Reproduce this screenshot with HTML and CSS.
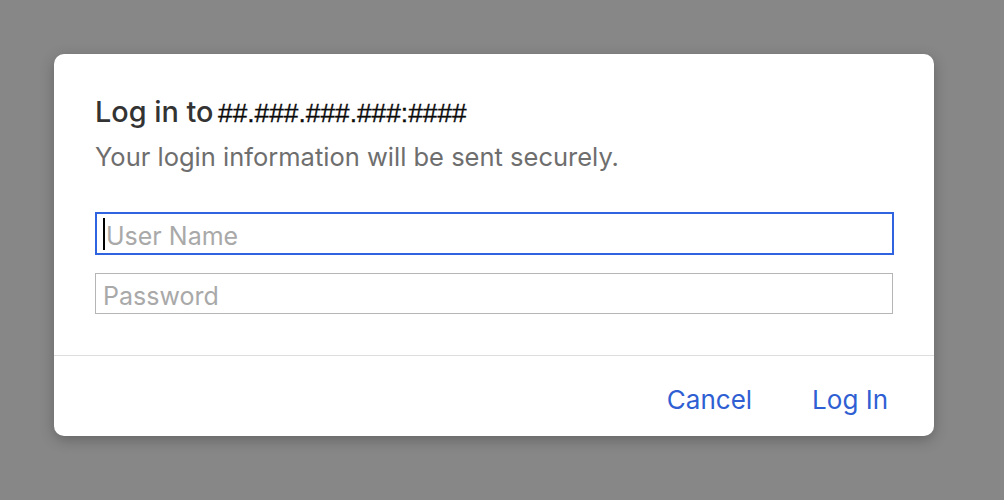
FILE: index.html
```html
<!DOCTYPE html>
<html>
<head>
<meta charset="utf-8">
<link rel="stylesheet" href="styles.css">
</head>
<body>
<div class="dialog">
  <div class="body">
    <h1 class="title">Log in to <span class="host">##.###.###.###:####</span></h1>
    <p class="subtitle">Your login information will be sent securely.</p>
    <div class="field focused"><span class="caret"></span><span class="ph">User Name</span></div>
    <div class="field"><span class="ph">Password</span></div>
  </div>
  <div class="footer">
    <span class="btn">Cancel</span>
    <span class="btn">Log In</span>
  </div>
</div>
</body>
</html>
```
FILE: styles.css
```css
html, body {
  margin: 0;
  padding: 0;
  width: 1004px;
  height: 500px;
  background: #878787;
  font-family: Inter, "Liberation Sans", Arial, sans-serif;
  overflow: hidden;
}
body {
  padding: 54px 0 0 54px;
  box-sizing: border-box;
}
.dialog {
  width: 880px;
  height: 382px;
  background: #fff;
  border-radius: 10px;
  box-shadow: 0 4px 14px rgba(0,0,0,0.25);
  display: flex;
  flex-direction: column;
  overflow: hidden;
}
.body {
  padding: 41px 41px 0 41px;
  height: 302px;
  box-sizing: border-box;
  border-bottom: 1px solid #dedede;
}
.title {
  margin: 0;
  font-size: 28.8px;
  font-weight: 500;
  color: #333;
  line-height: 34px;
  letter-spacing: 0;
  white-space: nowrap;
}
.host {
  font-family: "Liberation Sans", Arial, sans-serif;
  color: #0a0a0a;
  font-size: 26.3px;
  font-weight: normal;
  margin-left: -3px;
  -webkit-text-stroke: 0.3px #0a0a0a;
}
.subtitle {
  margin: 12px 0 0 0;
  font-size: 25.5px;
  line-height: 30px;
  color: #6e6e6e;
}
.field {
  box-sizing: border-box;
  height: 41px;
  margin-top: 40px;
  border: 1px solid #b5b5b5;
  display: flex;
  align-items: center;
  padding-left: 7px;
  padding-top: 4px;
}
.field + .field { margin-top: 18px; }
.field.focused {
  border: 2px solid #2f63e0;
  height: 43px;
  padding-left: 6px;
  margin-right: -1px;
}
.ph {
  font-size: 25px;
  color: #a9a9a9;
}
.caret {
  width: 2px;
  height: 32px;
  background: #000;
  margin-right: 1px;
  margin-top: -4px;
}
.footer {
  flex: 1;
  display: flex;
  justify-content: flex-end;
  align-items: center;
  gap: 60px;
  padding-right: 46px;
  padding-top: 6px;
}
.btn {
  font-size: 26px;
  color: #2f5fd3;
}
```
